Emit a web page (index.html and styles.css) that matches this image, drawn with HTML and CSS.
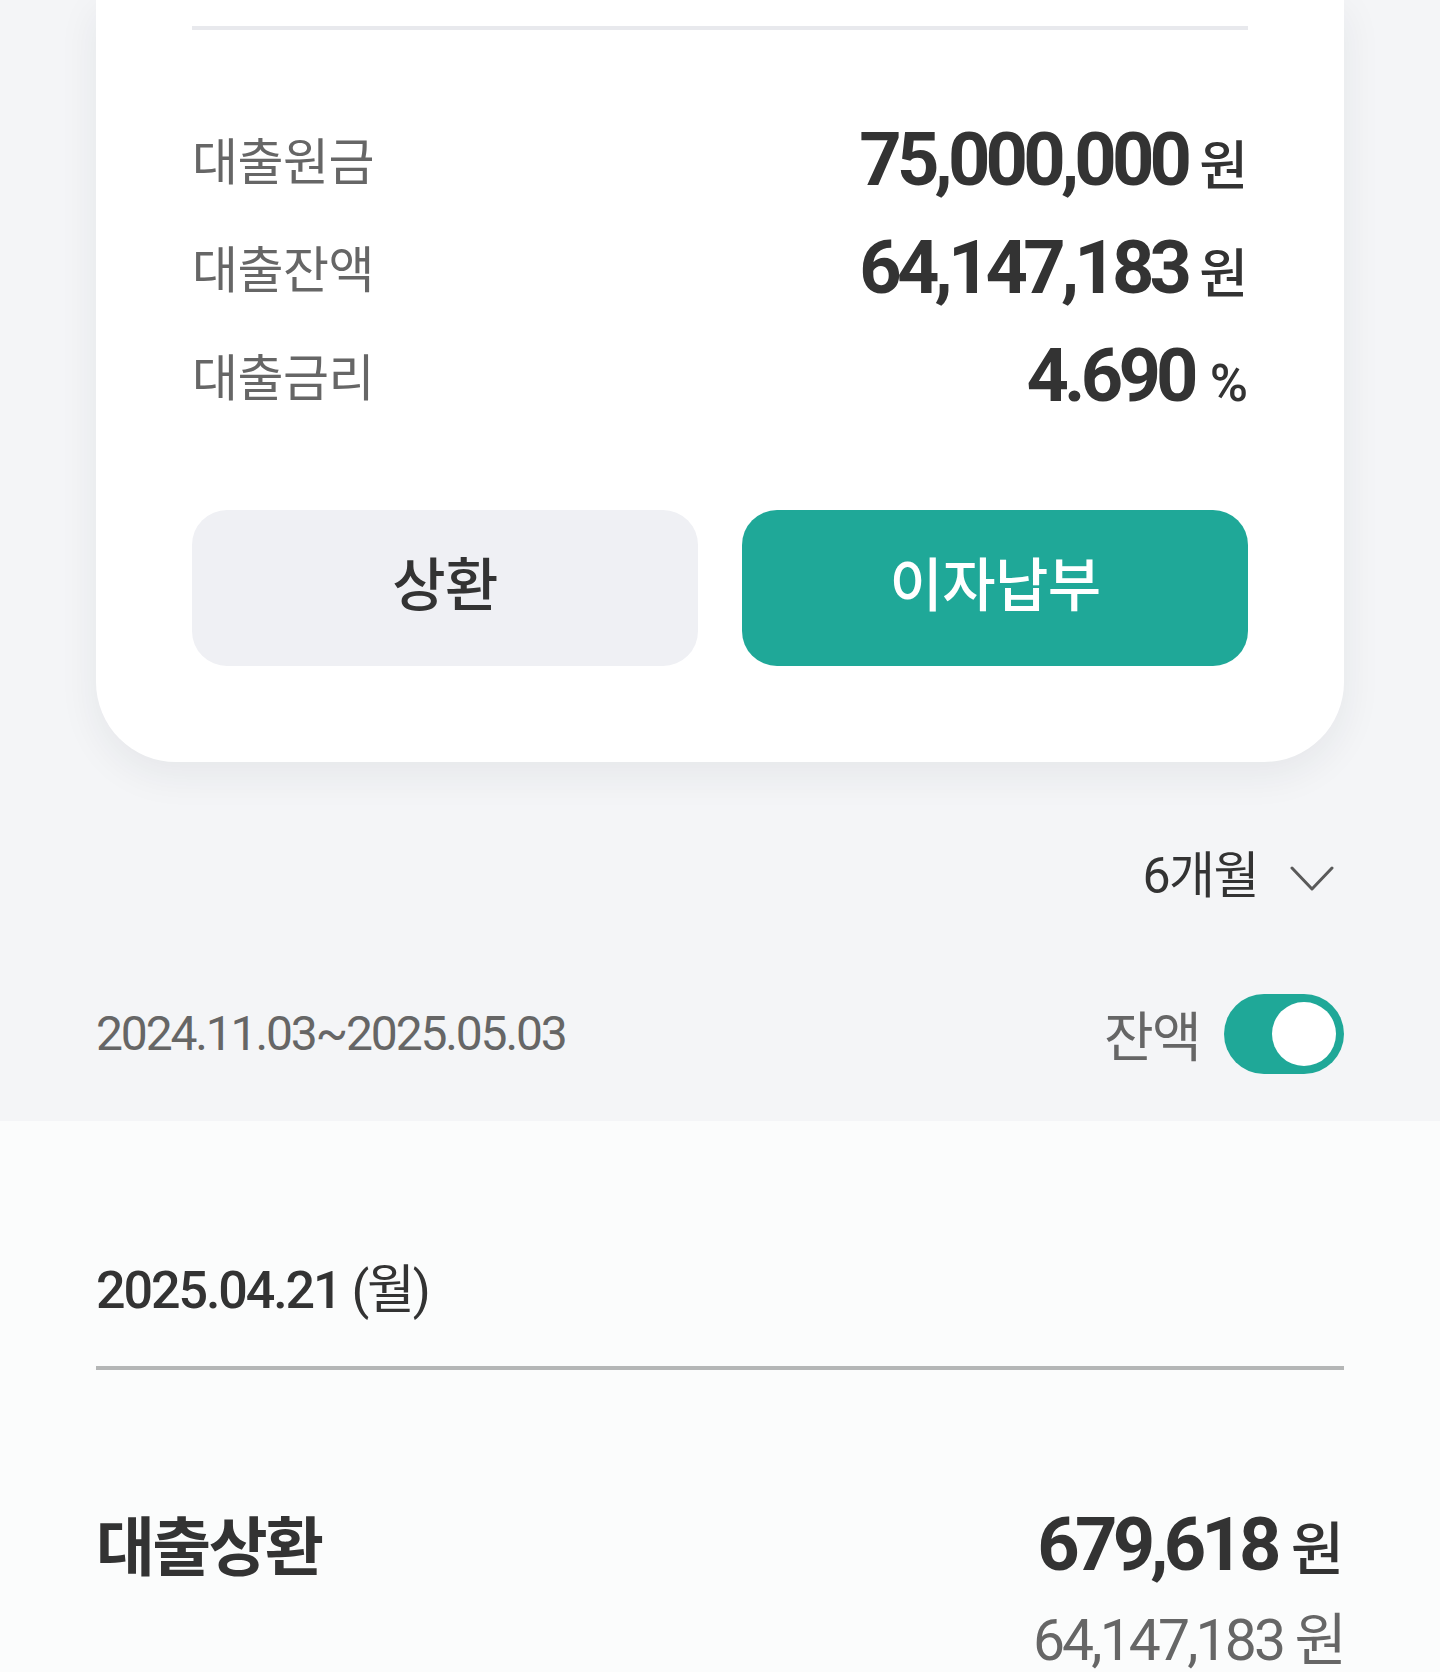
FILE: index.html
```html
<!DOCTYPE html>
<html lang="ko">
<head>
<meta charset="utf-8">
<title>대출 상세</title>
<link rel="stylesheet" href="styles.css">
</head>
<body>
<div class="top">
  <section class="card">
    <div class="card-divider"></div>
    <ul class="info">
      <li class="info-row">
        <span class="info-label">대출원금</span>
        <span class="info-value"><span class="num">75,000,000</span><span class="unit">원</span></span>
      </li>
      <li class="info-row">
        <span class="info-label">대출잔액</span>
        <span class="info-value"><span class="num">64,147,183</span><span class="unit">원</span></span>
      </li>
      <li class="info-row">
        <span class="info-label">대출금리</span>
        <span class="info-value"><span class="num">4.690</span><span class="unit unit-pct">%</span></span>
      </li>
    </ul>
    <div class="actions">
      <button class="btn btn-gray" type="button">상환</button>
      <button class="btn btn-green" type="button">이자납부</button>
    </div>
  </section>

  <div class="filter">
    <div class="period">
      <span class="period-text">6개월</span>
      <svg class="chevron" width="44" height="26" viewBox="0 0 44 26" aria-hidden="true">
        <polyline points="2,2 22,23 42,2" fill="none" stroke="#5a5a5a" stroke-width="3" stroke-linecap="round" stroke-linejoin="round"/>
      </svg>
    </div>
    <div class="range-row">
      <span class="range">2024.11.03~2025.05.03</span>
      <div class="balance">
        <span class="balance-label">잔액</span>
        <span class="toggle"><span class="knob"></span></span>
      </div>
    </div>
  </div>
</div>

<section class="history">
  <div class="day">2025.04.21 <span class="dow">(월)</span></div>
  <div class="day-divider"></div>
  <div class="tx">
    <div class="tx-main">
      <span class="tx-title">대출상환</span>
      <span class="tx-amount"><span class="num">679,618</span><span class="unit unit-lg">원</span></span>
    </div>
    <div class="tx-sub">
      <span class="tx-balance">64,147,183 원</span>
    </div>
  </div>
</section>
</body>
</html>
```

FILE: styles.css
```css
* {
  box-sizing: border-box;
}

html, body {
  margin: 0;
  padding: 0;
}

body {
  width: 1440px;
  height: 1672px;
  overflow: hidden;
  background: #fbfcfc;
  font-family: "Roboto", "Noto Sans CJK KR", sans-serif;
  color: #333333;
  letter-spacing: -0.05em;
}

.top {
  background: #f4f5f7;
  padding: 0 96px 47px;
}

.card {
  background: #ffffff;
  border-radius: 0 0 80px 80px;
  box-shadow: 0 12px 40px rgba(30, 40, 60, 0.07);
  padding: 26px 96px 96px;
}

.card-divider {
  height: 4px;
  background: #e8e9ed;
}

.info {
  list-style: none;
  margin: 76px 0 0;
  padding: 0;
}

.info-row {
  height: 108px;
  display: flex;
  justify-content: space-between;
  align-items: center;
}

.info-label {
  font-family: "Noto Sans CJK KR", sans-serif;
  font-size: 50px;
  line-height: 1.2;
  color: #666666;
  letter-spacing: -0.01em;
  margin-top: -4px;
}

.info-value {
  display: flex;
  align-items: baseline;
  line-height: 1.2;
}

.num {
  font-family: "Roboto", sans-serif;
  font-weight: 700;
  font-size: 74px;
  letter-spacing: -0.065em;
  color: #333333;
}

.unit {
  font-family: "Noto Sans CJK KR", sans-serif;
  font-weight: 500;
  font-size: 53px;
  margin-left: 12px;
  color: #333333;
  letter-spacing: 0;
}

.unit-pct {
  font-family: "Roboto", sans-serif;
  font-size: 52px;
  margin-left: 16px;
}

.actions {
  margin-top: 80px;
  display: flex;
  gap: 44px;
}

.btn {
  flex: 1;
  height: 156px;
  border: 0;
  border-radius: 35px;
  font-family: "Noto Sans CJK KR", sans-serif;
  font-size: 58px;
  font-weight: 500;
  letter-spacing: -0.01em;
  padding: 0 0 14px;
}

.btn-gray {
  background: #eff0f4;
  color: #333333;
}

.btn-green {
  background: #1fa898;
  color: #ffffff;
}

.filter {
  padding-top: 64px;
}

.period {
  height: 100px;
  display: flex;
  justify-content: flex-end;
  align-items: center;
  gap: 32px;
  padding-right: 10px;
}

.period-text {
  font-family: "Roboto", "Noto Sans CJK KR", sans-serif;
  font-size: 50px;
  line-height: 1.2;
  color: #333333;
  letter-spacing: -0.03em;
}

.chevron {
  display: block;
  margin-top: 6px;
}

.range-row {
  margin-top: 68px;
  height: 80px;
  display: flex;
  justify-content: space-between;
  align-items: center;
}

.range {
  font-family: "Roboto", sans-serif;
  font-size: 48px;
  line-height: 1.2;
  color: #666666;
  letter-spacing: -0.045em;
}

.balance {
  display: flex;
  align-items: center;
  gap: 24px;
}

.balance-label {
  font-family: "Noto Sans CJK KR", sans-serif;
  font-size: 54px;
  line-height: 1.2;
  color: #666666;
  letter-spacing: -0.03em;
}

.toggle {
  width: 120px;
  height: 80px;
  border-radius: 40px;
  background: #1fa898;
  display: flex;
  align-items: center;
  justify-content: flex-end;
  padding-right: 8px;
}

.knob {
  width: 64px;
  height: 64px;
  border-radius: 50%;
  background: #ffffff;
}

.history {
  padding: 130px 96px 0;
}

.day {
  height: 80px;
  line-height: 80px;
  font-family: "Roboto", "Noto Sans CJK KR", sans-serif;
  font-size: 52px;
  font-weight: 500;
  color: #333333;
  letter-spacing: -0.04em;
}

.dow {
  font-weight: 400;
}

.day-divider {
  margin-top: 35px;
  height: 4px;
  background: #b4b6b6;
}

.tx {
  margin-top: 135px;
}

.tx-main {
  height: 80px;
  display: flex;
  justify-content: space-between;
  align-items: center;
}

.tx-title {
  font-family: "Noto Sans CJK KR", sans-serif;
  font-size: 64px;
  font-weight: 700;
  line-height: 1.2;
  color: #333333;
  letter-spacing: -0.04em;
  margin-top: -6px;
}

.tx-amount {
  display: flex;
  align-items: baseline;
  line-height: 1.2;
}

.unit-lg {
  font-size: 58px;
  margin-left: 14px;
}

.tx-sub {
  margin-top: 16px;
  height: 80px;
  display: flex;
  justify-content: flex-end;
  align-items: center;
}

.tx-balance {
  font-family: "Roboto", "Noto Sans CJK KR", sans-serif;
  font-size: 57px;
  line-height: 1.2;
  color: #666666;
  letter-spacing: -0.05em;
}
```
